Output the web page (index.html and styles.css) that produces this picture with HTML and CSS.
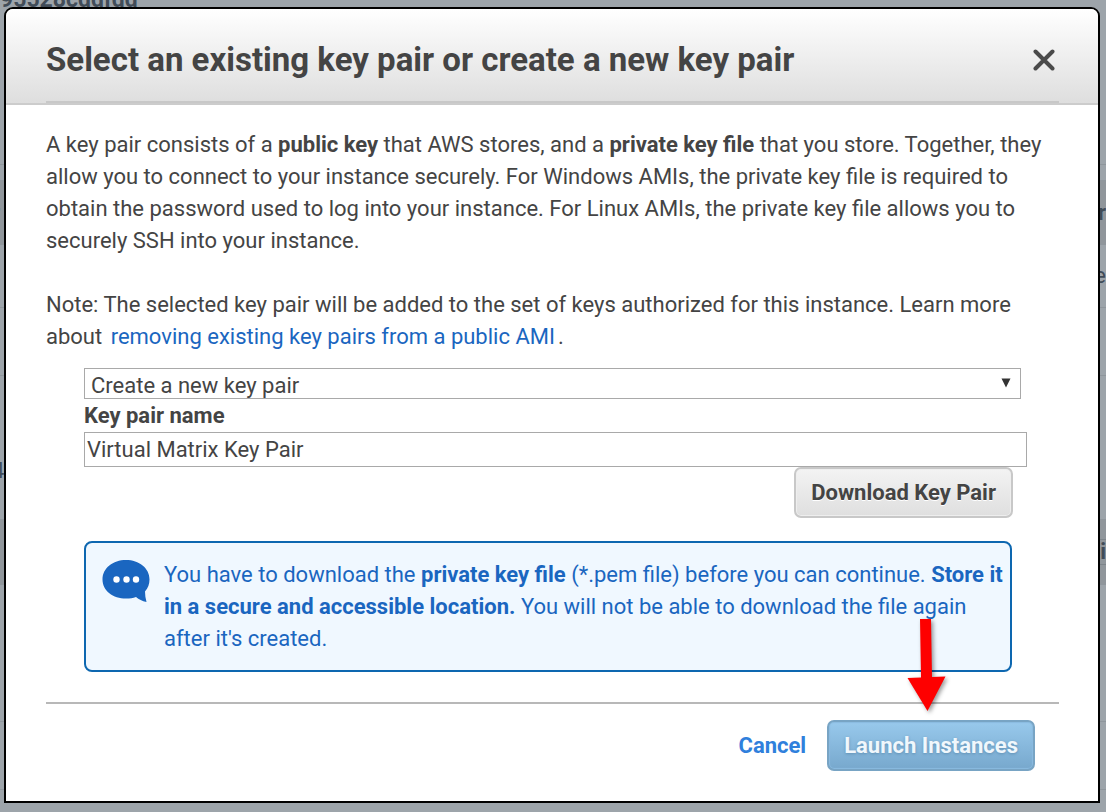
FILE: index.html
```html
<!DOCTYPE html>
<html lang="en">
<head>
    <meta charset="UTF-8">
    <meta name="viewport" content="width=device-width, initial-scale=1.0">
    <title>Select an existing key pair or create a new key pair</title>
    <link rel="stylesheet" href="styles.css">
</head>
<body>
    <!-- dimmed page behind the dialog -->
    <div class="page" aria-hidden="true">
        <div class="page-row row-top">95528cddfdd</div>
        <div class="page-row row-gap"></div>
        <div class="page-row row-head"><span>r</span><span>r</span></div>
        <div class="page-row row-item"><span></span><span>e</span></div>
        <div class="page-row row-space"></div>
        <div class="page-row row-count"><span>4</span></div>
        <div class="page-row row-bar"><span></span><span class="page-btn">i</span></div>
        <div class="page-row row-tall"></div>
        <div class="page-row row-space"></div>
        <div class="page-row row-rest"></div>
    </div>

    <div class="dialog" role="dialog" aria-labelledby="dialog-title">
        <header class="dialog-header">
            <div class="header-inner">
                <h1 id="dialog-title">Select an existing key pair or create a new key pair</h1>
                <button class="close" type="button" aria-label="Close">
                    <svg width="22" height="22" viewBox="0 0 22 22"><path d="M2.500 2.500L19.500 19.500M19.500 2.500L2.500 19.500" stroke="#4a4a4a" stroke-width="4" stroke-linecap="round"/></svg>
                </button>
            </div>
        </header>

        <div class="dialog-body">
            <p>A key pair consists of a <b>public key</b> that AWS stores, and a <b>private key file</b> that you store. Together, they allow you to connect to your instance securely. For Windows AMIs, the private key file is required to obtain the password used to log into your instance. For Linux AMIs, the private key file allows you to securely SSH into your instance.</p>
            <p>Note: The selected key pair will be added to the set of keys authorized for this instance. Learn more about <a class="doc-link" href="#">removing existing key pairs from a public AMI</a>.</p>

            <form class="key-form">
                <div class="select-wrap">
                    <select aria-label="Key pair option">
                        <option>Create a new key pair</option>
                    </select>
                    <svg class="caret" width="10" height="10" viewBox="0 0 10 10"><path d="M0.500 0.500H9.500L5 9.500Z" fill="#333"/></svg>
                </div>
                <label for="key-name">Key pair name</label>
                <input id="key-name" type="text" value="Virtual Matrix Key Pair">
                <button class="btn btn-default" type="button">Download Key Pair</button>
                <div class="alert">
                    <svg class="bubble" width="48" height="44" viewBox="0 0 48 44">
                        <path d="M24 1C11 1 0.500 9 0.500 20.500S11 39.500 24 39.500C28 39.500 31 39 34 38C37 40.500 40 42 44.500 43C43.500 39.500 43 36 43 32.500C46 29 47.500 25 47.500 20.500C47.500 9 37 1 24 1Z" fill="#1a66c0"/>
                        <circle cx="14.500" cy="20.500" r="3.200" fill="#fff"/>
                        <circle cx="24.500" cy="20.500" r="3.200" fill="#fff"/>
                        <circle cx="34" cy="20.500" r="3.200" fill="#fff"/>
                    </svg>
                    <p>You have to download the <b>private key file</b> (*.pem file) before you can continue. <b>Store it in a secure and accessible location.</b> You will not be able to download the file again after it's created.</p>
                </div>
            </form>

            <footer class="dialog-footer">
                <a class="cancel" href="#">Cancel</a>
                <div class="launch">
                    <button class="btn btn-primary" type="button">Launch Instances</button>
                    <svg class="arrow" width="44" height="100" viewBox="0 0 44 100"><path d="M14 2H25L26 60L39.500 59.500L21.500 94L1.500 61L15 60.500Z" fill="#fe0000"/></svg>
                </div>
            </footer>
        </div>
    </div>
</body>
</html>
```
FILE: styles.css
```css
* {
    box-sizing: border-box;
    margin: 0;
    padding: 0;
}

body {
    display: grid;
    min-height: 100vh;
    background: #9da4aa;
    color: #444;
    font-family: Roboto, "Liberation Sans", sans-serif;
    font-size: 22px;
    line-height: 32px;
    overflow: hidden;
}

button,
input,
select {
    font: inherit;
    color: inherit;
}

/* page behind */
.page,
.dialog {
    grid-area: 1 / 1;
    min-width: 0;
}

.page {
    display: flex;
    flex-direction: column;
    margin-left: -8px;
    color: #414c58;
    overflow: hidden;
}

.page-row {
    display: flex;
    justify-content: space-between;
    align-items: center;
    border-bottom: 1px solid #8f969c;
}

.row-top {
    height: 165px;
    align-items: flex-start;
    padding-left: 8px;
    font-size: 23px;
    font-weight: 700;
    line-height: 0;
}

.row-gap {
    height: 16px;
}

.row-head {
    height: 64px;
    background: #90969b;
    font-weight: 700;
}

.row-item {
    height: 63px;
}

.row-space {
    height: 68px;
}

.row-count {
    height: 144px;
    padding-top: 46px;
}

.row-bar {
    height: 65px;
    background: #90969b;
}

.row-tall {
    height: 137px;
}

.row-rest {
    border: 0;
}

.page-btn {
    border: 1px solid #7d848a;
    border-width: 1px 0;
    line-height: 24px;
    font-weight: 700;
}

/* dialog */
.dialog {
    margin: 7px 6px 9px 4px;
    background: #fff;
    border: 2px solid #000;
    border-radius: 9px 9px 0 0;
}

.dialog-header {
    padding: 0 39px 0 40px;
    background: linear-gradient(#fff, #dedede);
    border-bottom: 2px solid #ccc;
    border-radius: 7px 7px 0 0;
}

.header-inner {
    display: flex;
    justify-content: space-between;
    align-items: center;
    height: 94px;
    padding-top: 10px;
    border-bottom: 2px solid #c8c8c8;
}

h1 {
    font-size: 33px;
    font-weight: 700;
    line-height: 40px;
}

.close {
    display: flex;
    padding: 4px;
    background: none;
    border: 0;
    cursor: pointer;
}

.dialog-body {
    padding: 24px 39px 30px 40px;
}

.dialog-body > p {
    margin-bottom: 32px;
}

a {
    color: #1a66c0;
    text-decoration: none;
}

.doc-link {
    margin: 0 3px;
}

.key-form {
    display: flex;
    flex-direction: column;
    margin: -17px 38px 0;
}

.select-wrap {
    position: relative;
    display: flex;
}

select {
    appearance: none;
    width: 100%;
    height: 31px;
    padding: 1px 6px 0;
    background: #fff;
    border: 1px solid #a9a9a9;
    border-radius: 0;
}

/* arrow drawn over the select */
.caret {
    position: absolute;
    top: 10px;
    right: 10px;
    pointer-events: none;
}

label {
    padding-top: 1px;
    font-weight: 700;
}

input {
    width: calc(100% + 6px);
    height: 35px;
    padding: 0 2px;
    background: #fff;
    border: 1px solid #a9a9a9;
}

.btn {
    height: 51px;
    padding: 0 15px;
    font-weight: 700;
    border-radius: 7px;
    cursor: pointer;
}

.btn-default {
    align-self: flex-end;
    margin-right: 8px;
    background: linear-gradient(#f3f3f3, #dfdfdf);
    border: 2px solid #c8c8c8;
    box-shadow: inset 0 0 0 1px #eee;
    text-shadow: 0 1px 0 #fff;
}

.btn-primary {
    background: linear-gradient(#98c9ec, #77a8cd);
    border: 2px solid #78a4c4;
    box-shadow: inset 0 0 1px 1px #8abbe0;
    color: #f0f7fc;
    text-shadow: 0 1px 3px #5f8fb3;
}

.alert {
    display: flex;
    gap: 14px;
    margin: 23px 9px 0 0;
    padding: 16px 4px 15px 16px;
    background: #f0f8ff;
    border: 2px solid #0d67b0;
    border-radius: 8px;
    color: #1a66c0;
}

.bubble {
    flex: none;
}

.dialog-footer {
    display: flex;
    justify-content: flex-end;
    align-items: center;
    gap: 21px;
    margin-top: 30px;
    padding: 16px 24px 0 0;
    border-top: 2px solid #b8b8b8;
}

.cancel {
    color: #2f80dc;
    font-weight: 700;
}

.launch {
    position: relative;
}

/* pointer over the launch button */
.arrow {
    position: absolute;
    left: 79px;
    bottom: 54px;
    filter: drop-shadow(2px 2px 2px rgba(0, 0, 0, 0.4));
    pointer-events: none;
}
```
